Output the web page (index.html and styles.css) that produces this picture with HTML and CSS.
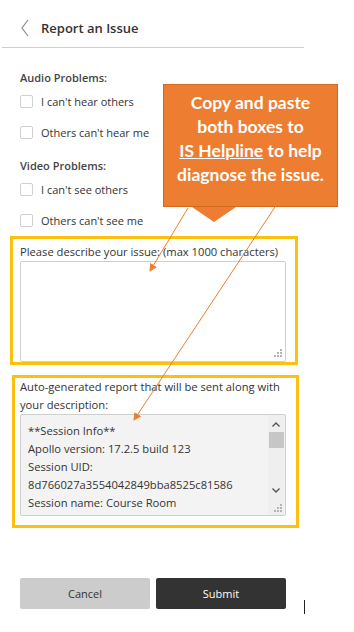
FILE: index.html
```html
<!DOCTYPE html>
<html lang="en">
<head>
    <meta charset="UTF-8">
    <meta name="viewport" content="width=device-width, initial-scale=1.0">
    <title>Report an Issue</title>
    <link rel="stylesheet" href="styles.css">
</head>
<body>

<div class="page">
    <div class="header">
        <svg class="back" width="10" height="18" viewBox="0 0 10 18">
            <polyline points="8,1 2,9 8,17" fill="none" stroke="#8a8a8a" stroke-width="1.2"/>
        </svg>
        <span class="title">Report an Issue</span>
    </div>

    <div class="content">
        <div class="group-label">Audio Problems:</div>
        <label class="option"><span class="box"></span>I can't hear others</label>
        <label class="option"><span class="box"></span>Others can't hear me</label>

        <div class="group-label video">Video Problems:</div>
        <label class="option"><span class="box"></span>I can't see others</label>
        <label class="option"><span class="box"></span>Others can't see me</label>
    </div>

    <div class="highlight describe">
        <div class="field-label">Please describe your issue: (max 1000 characters)</div>
        <div class="describe-text">
            <svg class="grip" width="8" height="8" viewBox="0 0 8 8" fill="#b5b5b5">
                <rect x="6" y="0" width="2" height="2"/>
                <rect x="3" y="3" width="2" height="2"/>
                <rect x="6" y="3" width="2" height="2"/>
                <rect x="0" y="6" width="2" height="2"/>
                <rect x="3" y="6" width="2" height="2"/>
                <rect x="6" y="6" width="2" height="2"/>
            </svg>
        </div>
    </div>

    <div class="highlight report">
        <div class="field-label">Auto-generated report that will be sent along with your description:</div>
        <div class="report-box">
            <div class="report-text">
                <div>**Session Info**</div>
                <div>Apollo version: 17.2.5 build 123</div>
                <div>Session UID:</div>
                <div>8d766027a3554042849bba8525c81586</div>
                <div>Session name: Course Room</div>
            </div>
            <div class="scrollbar">
                <svg class="arrow" width="8" height="5" viewBox="0 0 8 5">
                    <polyline points="0.5,4.5 4,1 7.5,4.5" fill="none" stroke="#555" stroke-width="1.4"/>
                </svg>
                <span class="thumb"></span>
                <span class="spacer"></span>
                <svg class="arrow down" width="8" height="5" viewBox="0 0 8 5">
                    <polyline points="0.5,0.5 4,4 7.5,0.5" fill="none" stroke="#555" stroke-width="1.4"/>
                </svg>
                <svg class="grip" width="8" height="8" viewBox="0 0 8 8" fill="#b5b5b5">
                    <rect x="6" y="0" width="2" height="2"/>
                    <rect x="3" y="3" width="2" height="2"/>
                    <rect x="6" y="3" width="2" height="2"/>
                    <rect x="0" y="6" width="2" height="2"/>
                    <rect x="3" y="6" width="2" height="2"/>
                    <rect x="6" y="6" width="2" height="2"/>
                </svg>
            </div>
        </div>
    </div>

    <div class="buttons">
        <button class="cancel">Cancel</button>
        <button class="submit">Submit</button>
    </div>

    <div class="callout">
        Copy and paste<br>
        both boxes to<br>
        <u>IS Helpline</u> to help<br>
        diagnose the issue.
    </div>

    <svg class="arrows" width="354" height="632" viewBox="0 0 354 632">
        <defs>
            <marker id="head" markerWidth="8" markerHeight="8" refX="7" refY="4" orient="auto" markerUnits="userSpaceOnUse">
                <path d="M0,0 L8,4 L0,8 Z" fill="#ed7d31"/>
            </marker>
        </defs>
        <line x1="188" y1="208" x2="150" y2="271" stroke="#ed7d31" stroke-width="1" marker-end="url(#head)"/>
        <line x1="275" y1="207" x2="134" y2="420" stroke="#ed7d31" stroke-width="1" marker-end="url(#head)"/>
    </svg>

    <span class="cursor"></span>
</div>

</body>
</html>
```

FILE: styles.css
```css
body {
    margin: 0;
    font-family: "Open Sans", Arial, sans-serif;
    color: #333;
    background: #fff;
}
.page {
    position: relative;
    width: 354px;
    height: 632px;
    overflow: hidden;
}
.header {
    display: flex;
    align-items: center;
    height: 48px;
    box-sizing: border-box;
    padding-top: 8px;
    margin-left: 2px;
    width: 302px;
    border-bottom: 1px solid #cfcfcf;
}
.back {
    margin-left: 18px;
    margin-right: 11px;
}
.title {
    font-size: 13px;
    font-weight: 600;
    color: #333;
}
.content {
    padding: 0 20px;
}
.group-label {
    margin-top: 22px;
    height: 16px;
    line-height: 16px;
    font-size: 11px;
    font-weight: 600;
    color: #444;
}
.group-label.video {
    margin-top: 10px;
}
.option {
    display: flex;
    align-items: center;
    height: 31px;
    font-size: 11px;
    color: #333;
}
.box {
    width: 11px;
    height: 11px;
    border: 1px solid #d0d0d0;
    border-radius: 2px;
    margin-right: 8px;
}
.highlight {
    border: 3px solid #fcc00e;
}
.describe {
    margin-left: 10px;
    width: 288px;
    height: 129px;
    box-sizing: border-box;
    padding: 5px 0 0 7px;
    overflow: hidden;
}
.field-label {
    font-size: 11.2px;
    line-height: 16px;
    color: #333;
}
.describe-text {
    display: flex;
    justify-content: flex-end;
    align-items: flex-end;
    margin-top: 1px;
    width: 266px;
    height: 101px;
    box-sizing: border-box;
    padding: 0 3px 4px 0;
    border: 1px solid #cfcfcf;
    border-radius: 2px;
}
.report {
    margin-left: 12px;
    margin-top: 10px;
    width: 287px;
    box-sizing: border-box;
    padding: 0 10px 9px 5px;
}
.report .field-label {
    line-height: 18px;
}
.report-box {
    display: flex;
    height: 102px;
    box-sizing: border-box;
    border: 1px solid #cfcfcf;
    border-radius: 2px;
    background: #f3f3f3;
    overflow: hidden;
}
.report-text {
    flex: 1;
    padding: 7px 0 0 7px;
    font-size: 11.2px;
    line-height: 18px;
    color: #333;
    white-space: nowrap;
}
.scrollbar {
    width: 16px;
    margin-right: 1px;
    display: flex;
    flex-direction: column;
    align-items: center;
    background: #efefef;
}
.arrow {
    margin-top: 7px;
    margin-bottom: 5px;
}
.arrow.down {
    margin: 0 0 11px;
}
.thumb {
    width: 15px;
    height: 16px;
    background: #c6c6c6;
}
.spacer {
    flex: 1;
}
.grip {
    display: block;
}
.scrollbar .grip {
    align-self: flex-end;
    margin: 0 2px 3px 0;
}
.buttons {
    display: flex;
    gap: 6px;
    margin: 50px 0 0 20px;
}
.buttons button {
    width: 130px;
    height: 31px;
    border: none;
    border-radius: 2px;
    font-family: inherit;
    font-size: 11px;
}
.cancel {
    background-color: #cccccc;
    color: #333;
}
.submit {
    background-color: #333;
    color: #fff;
}
.callout {
    position: absolute;
    left: 163px;
    top: 84px;
    width: 175px;
    height: 123px;
    box-sizing: border-box;
    padding-top: 6px;
    background: #ed7d31;
    border: 1px solid #d2691f;
    color: #fff;
    font-family: Lato, "Open Sans", sans-serif;
    font-weight: bold;
    font-size: 17.5px;
    line-height: 24px;
    text-align: center;
}
.callout::after {
    content: "";
    position: absolute;
    left: 28px;
    top: 122px;
    border-left: 22px solid transparent;
    border-right: 22px solid transparent;
    border-top: 15px solid #ed7d31;
}
.arrows {
    position: absolute;
    left: 0;
    top: 0;
    pointer-events: none;
}
.cursor {
    position: absolute;
    left: 304px;
    top: 600px;
    width: 1px;
    height: 14px;
    background: #222;
}
```
